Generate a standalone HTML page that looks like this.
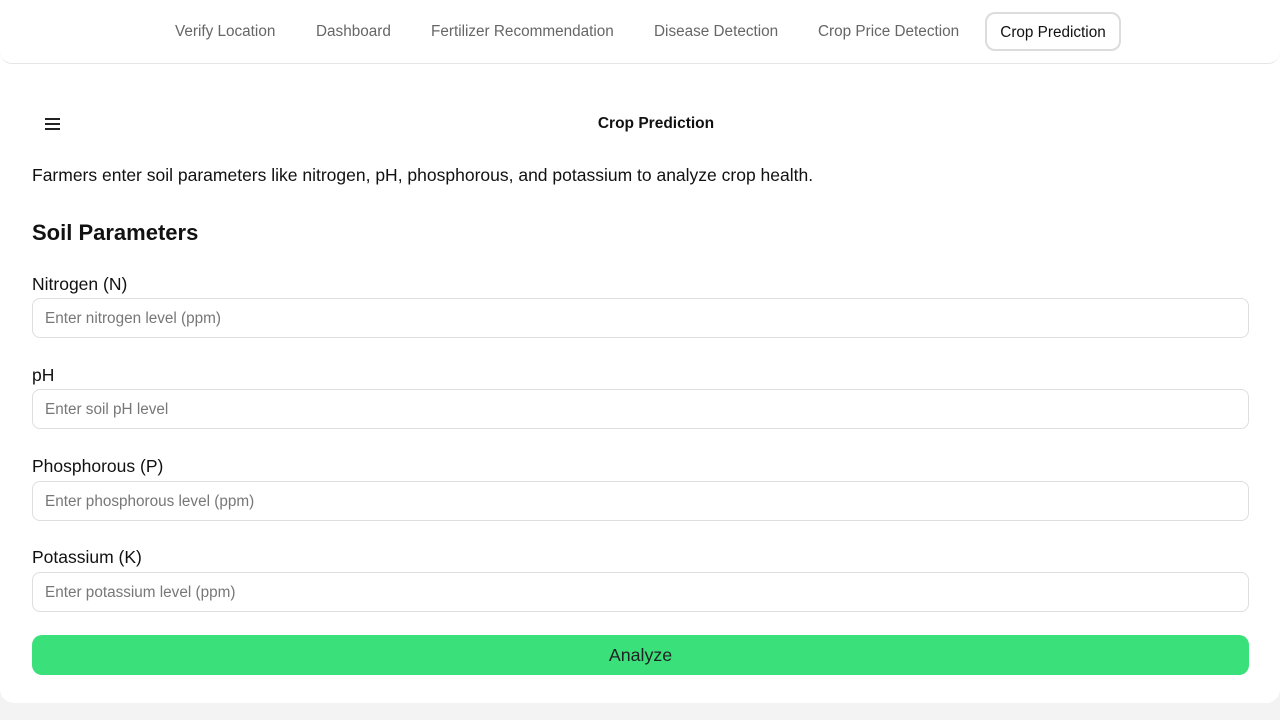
<!DOCTYPE html>
<html><head><meta charset="utf-8"><style>
*{box-sizing:border-box;margin:0;padding:0}
body{width:1280px;height:720px;background:#f3f3f3;font-family:"Liberation Sans",Arial,sans-serif;color:#111;overflow:hidden;position:relative}
.card{position:absolute;left:0;top:0;width:1280px;height:703px;background:#fff;border-radius:0 0 14px 14px}
.nav{position:absolute;left:0;top:0;width:1280px;height:64px;border-bottom:1px solid #e6e6e6;border-radius:0 0 12px 12px}
.nav span{position:absolute;top:23px;font-size:15.3px;color:#666;white-space:nowrap}
.act{position:absolute;left:985px;top:12px;width:136px;height:39px;border:2px solid #dcdcdc;border-radius:10px;font-size:15.3px;color:#111;text-align:center;line-height:37px}
.t{position:absolute;white-space:nowrap}
.in{position:absolute;left:32px;width:1217px;height:40px;border:1px solid #dedede;border-radius:8px;padding-left:12px;font-size:15.3px;line-height:39px;color:#777}
.ham{position:absolute;left:45px;width:15px;height:2px;background:#222}
.l{font-size:17.5px}
</style></head><body>
<div class="card"></div>
<div class="nav">
<span style="left:175px">Verify Location</span>
<span style="left:316px">Dashboard</span>
<span style="left:431px">Fertilizer Recommendation</span>
<span style="left:654px">Disease Detection</span>
<span style="left:818px">Crop Price Detection</span>
<div class="act">Crop Prediction</div>
</div>
<div class="ham" style="top:118px"></div><div class="ham" style="top:123px"></div><div class="ham" style="top:128px"></div>
<div class="t" style="left:0;width:1312px;text-align:center;top:115px;font-size:15.5px;font-weight:bold">Crop Prediction</div>
<div class="t l" style="left:32px;top:165px">Farmers enter soil parameters like nitrogen, pH, phosphorous, and potassium to analyze crop health.</div>
<div class="t" style="left:32px;top:220px;font-size:22px;font-weight:bold">Soil Parameters</div>
<div class="t l" style="left:32px;top:274px">Nitrogen (N)</div>
<div class="in" style="top:298px">Enter nitrogen level (ppm)</div>
<div class="t l" style="left:32px;top:365px">pH</div>
<div class="in" style="top:389px">Enter soil pH level</div>
<div class="t l" style="left:32px;top:456px">Phosphorous (P)</div>
<div class="in" style="top:481px">Enter phosphorous level (ppm)</div>
<div class="t l" style="left:32px;top:547px">Potassium (K)</div>
<div class="in" style="top:572px">Enter potassium level (ppm)</div>
<div style="position:absolute;left:32px;top:635px;width:1217px;height:40px;background:#3ae07a;border-radius:10px;text-align:center;line-height:40px;font-size:17.8px;color:#222">Analyze</div>
</body></html>
